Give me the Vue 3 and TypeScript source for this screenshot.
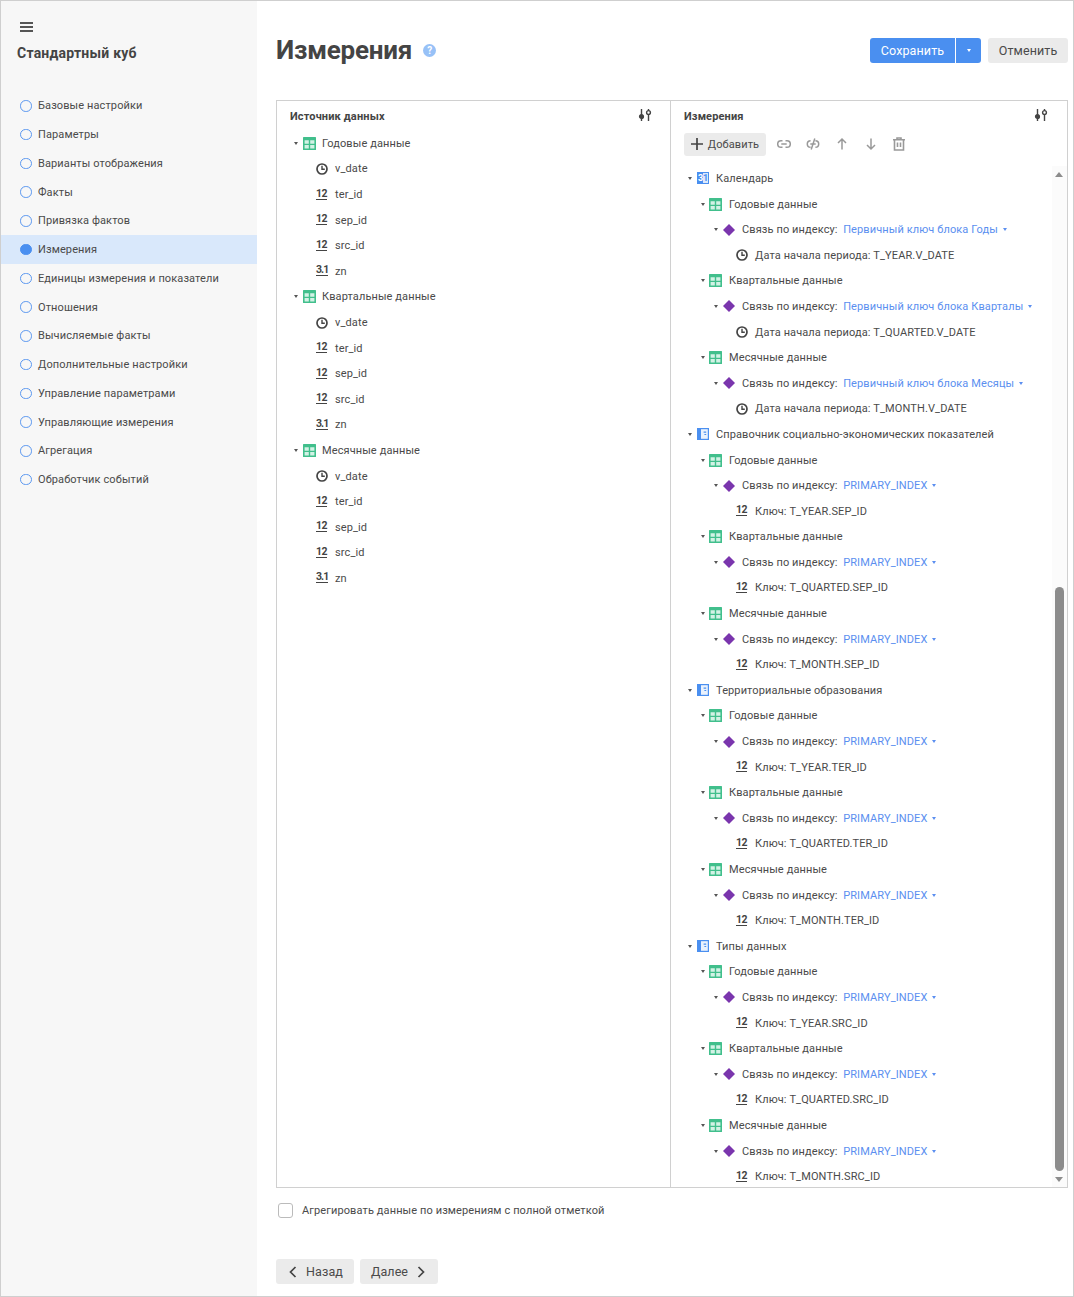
<script setup lang="ts">
type Kind = 'table' | 'clock' | 'n12' | 'n31' | 'cal' | 'dict' | 'diamond'
interface Row { level: number; icon: Kind; caret: boolean; text: string; link?: string }

const menu = [
  'Базовые настройки', 'Параметры', 'Варианты отображения', 'Факты', 'Привязка фактов', 'Измерения',
  'Единицы измерения и показатели', 'Отношения', 'Вычисляемые факты', 'Дополнительные настройки',
  'Управление параметрами', 'Управляющие измерения', 'Агрегация', 'Обработчик событий',
]

const blocks = ['Годовые данные', 'Квартальные данные', 'Месячные данные']

const sourceRows: Row[] = blocks.flatMap((b) => [
  { level: 0, icon: 'table' as Kind, caret: true, text: b },
  { level: 1, icon: 'clock' as Kind, caret: false, text: 'v_date' },
  { level: 1, icon: 'n12' as Kind, caret: false, text: 'ter_id' },
  { level: 1, icon: 'n12' as Kind, caret: false, text: 'sep_id' },
  { level: 1, icon: 'n12' as Kind, caret: false, text: 'src_id' },
  { level: 1, icon: 'n31' as Kind, caret: false, text: 'zn' },
])

function dim(name: string, icon: Kind, leaf: Kind, items: [string, string, string][]): Row[] {
  const rows: Row[] = [{ level: 0, icon, caret: true, text: name }]
  items.forEach(([block, link, key]) => {
    rows.push({ level: 1, icon: 'table', caret: true, text: block })
    rows.push({ level: 2, icon: 'diamond', caret: true, text: 'Связь по индексу:', link })
    rows.push({ level: 3, icon: leaf, caret: false, text: key })
  })
  return rows
}

function keyed(name: string, suffix: string): Row[] {
  return dim(name, 'dict', 'n12', [
    [blocks[0], 'PRIMARY_INDEX', `Ключ: T_YEAR.${suffix}`],
    [blocks[1], 'PRIMARY_INDEX', `Ключ: T_QUARTED.${suffix}`],
    [blocks[2], 'PRIMARY_INDEX', `Ключ: T_MONTH.${suffix}`],
  ])
}

const dimRows: Row[] = [
  ...dim('Календарь', 'cal', 'clock', [
    [blocks[0], 'Первичный ключ блока Годы', 'Дата начала периода: T_YEAR.V_DATE'],
    [blocks[1], 'Первичный ключ блока Кварталы', 'Дата начала периода: T_QUARTED.V_DATE'],
    [blocks[2], 'Первичный ключ блока Месяцы', 'Дата начала периода: T_MONTH.V_DATE'],
  ]),
  ...keyed('Справочник социально-экономических показателей', 'SEP_ID'),
  ...keyed('Территориальные образования', 'TER_ID'),
  ...keyed('Типы данных', 'SRC_ID'),
]

const indent = (level: number) => ({ paddingLeft: `${15 + level * 13}px` })
</script>

<template>
  <div class="page">
    <aside class="side">
      <button class="burger" aria-label="Меню"><i></i><i></i><i></i></button>
      <div class="cube">Стандартный куб</div>
      <ul class="menu">
        <li v-for="m in menu" :key="m" class="mi" :class="{ on: m === 'Измерения' }">
          <span class="dot"></span>{{ m }}
        </li>
      </ul>
    </aside>

    <main class="main">
      <header class="top">
        <h1>Измерения</h1>
        <span class="help">?</span>
        <div class="actions">
          <div class="split">
            <button class="btn primary save">Сохранить</button>
            <button class="btn primary drop"><span class="caret white"></span></button>
          </div>
          <button class="btn cancel">Отменить</button>
        </div>
      </header>

      <section class="panels">
        <div class="panel left">
          <div class="phead">
            <span>Источник данных</span>
            <svg class="tune" width="14" height="14" viewBox="0 0 14 14" fill="none" stroke="#444" stroke-width="1.4">
              <path d="M3.5 1v12M10.5 1v12" />
              <circle cx="3.5" cy="8.5" r="1.9" fill="#444" />
              <circle cx="10.5" cy="4.5" r="1.9" fill="#fff" />
            </svg>
          </div>
          <div class="tree">
            <div v-for="(r, i) in sourceRows" :key="i" class="row" :style="indent(r.level)">
              <span class="cbox"><span v-if="r.caret" class="caret"></span></span>
              <span class="ibox">
                <svg v-if="r.icon === 'table'" width="13" height="13" viewBox="0 0 13 13"><rect width="13" height="13" rx="0.5" fill="#41bf8c" /><path d="M1.6 3.2h4.2v3.6H1.6zM7.2 3.2h4.2v3.6H7.2zM1.6 8.1h4.2v3.4H1.6zM7.2 8.1h4.2v3.4H7.2z" fill="#d3f2e5" /></svg>
                <svg v-else-if="r.icon === 'clock'" width="12" height="12" viewBox="0 0 12 12" fill="none" stroke="#444" stroke-width="1.7"><circle cx="6" cy="6" r="5" /><path d="M6 2.8V6.3H8.8" stroke-width="1.4" /></svg>
                <span v-else class="num" :class="{ small: r.icon === 'n31' }">{{ r.icon === 'n12' ? '12' : '3.1' }}</span>
              </span>
              <span>{{ r.text }}</span>
            </div>
          </div>
        </div>

        <div class="panel right">
          <div class="phead">
            <span>Измерения</span>
            <svg class="tune" width="14" height="14" viewBox="0 0 14 14" fill="none" stroke="#444" stroke-width="1.4">
              <path d="M3.5 1v12M10.5 1v12" />
              <circle cx="3.5" cy="8.5" r="1.9" fill="#444" />
              <circle cx="10.5" cy="4.5" r="1.9" fill="#fff" />
            </svg>
          </div>
          <div class="tools">
            <button class="btn add">
              <svg width="12" height="12" viewBox="0 0 12 12" stroke="#444" stroke-width="1.7"><path d="M6 0v12M0 6h12" /></svg>
              Добавить
            </button>
            <svg class="tool" width="14" height="14" viewBox="0 0 14 14" fill="none" stroke="#999" stroke-width="1.5"><path d="M5.5 3.7H4a3.3 3.3 0 0 0 0 6.6h1.5M8.5 3.7H10a3.3 3.3 0 0 1 0 6.6H8.5M4.3 7h5.4" /></svg>
            <svg class="tool" width="14" height="14" viewBox="0 0 14 14" fill="none" stroke="#999" stroke-width="1.5"><path d="M4.6 3.7a3.3 3.3 0 0 0 0 6.6M9.4 3.7a3.3 3.3 0 0 1 0 6.6M4.3 7h5.4M8.8 1.5 5.2 12.5" /></svg>
            <svg class="tool" width="14" height="14" viewBox="0 0 14 14" fill="none" stroke="#999" stroke-width="1.5"><path d="M7 12.5V2M3 6l4-4 4 4" /></svg>
            <svg class="tool tight" width="14" height="14" viewBox="0 0 14 14" fill="none" stroke="#999" stroke-width="1.5"><path d="M7 1.5V12M3 8l4 4 4-4" /></svg>
            <svg class="tool" width="14" height="14" viewBox="0 0 14 14" fill="none" stroke="#999" stroke-width="1.6"><path d="M1 2.7h12M5 2.7V1h4v1.7M2.5 2.7V13h9V2.7M5.5 5.5V10M8.5 5.5V10" /></svg>
          </div>
          <div class="scroll">
            <div class="tree dims">
              <div v-for="(r, i) in dimRows" :key="i" class="row" :style="indent(r.level)">
                <span class="cbox"><span v-if="r.caret" class="caret"></span></span>
                <span class="ibox">
                  <svg v-if="r.icon === 'table'" class="nudge" width="13" height="13" viewBox="0 0 13 13"><rect width="13" height="13" rx="0.5" fill="#41bf8c" /><path d="M1.6 3.2h4.2v3.6H1.6zM7.2 3.2h4.2v3.6H7.2zM1.6 8.1h4.2v3.4H1.6zM7.2 8.1h4.2v3.4H7.2z" fill="#d3f2e5" /></svg>
                  <svg v-else-if="r.icon === 'clock'" width="12" height="12" viewBox="0 0 12 12" fill="none" stroke="#444" stroke-width="1.7"><circle cx="6" cy="6" r="5" /><path d="M6 2.8V6.3H8.8" stroke-width="1.4" /></svg>
                  <svg v-else-if="r.icon === 'diamond'" width="12" height="12" viewBox="0 0 12 12"><path d="M6 0 12 6 6 12 0 6z" fill="#7a35ad" /></svg>
                  <svg v-else-if="r.icon === 'dict'" width="12" height="12" viewBox="0 0 12 12"><rect width="12" height="12" fill="#4a8ff0" /><path d="M4 1.2h6.8v9.6H4z" fill="#eaf2fd" /><path d="M6.6 3.6h2.6v1.1H6.6zM7.4 6h1.8v1.1H7.4z" fill="#4a8ff0" /></svg>
                  <span v-else-if="r.icon === 'cal'" class="cal"><b>3</b><b>1</b></span>
                  <span v-else class="num">12</span>
                </span>
                <span>{{ r.text }}</span>
                <span v-if="r.link" class="link">{{ r.link }}<span class="caret blue"></span></span>
              </div>
            </div>
            <div class="bar">
              <span class="arr up"></span>
              <span class="thumb"></span>
              <span class="arr down"></span>
            </div>
          </div>
        </div>
      </section>

      <label class="check"><span class="box"></span>Агрегировать данные по измерениям с полной отметкой</label>

      <footer class="nav">
        <button class="btn navb back">
          <svg width="8" height="12" viewBox="0 0 8 12" fill="none" stroke="#444" stroke-width="1.7"><path d="M6.5 1 1.5 6l5 5" /></svg>
          Назад
        </button>
        <button class="btn navb next">
          Далее
          <svg width="8" height="12" viewBox="0 0 8 12" fill="none" stroke="#444" stroke-width="1.7"><path d="M1.5 1l5 5-5 5" /></svg>
        </button>
      </footer>
    </main>
  </div>
</template>

<style scoped>
.page {
  box-sizing: border-box;
  width: 1074px;
  height: 1297px;
  border: 1px solid #cfcfcf;
  display: flex;
  overflow: hidden;
  background: #fff;
  color: #4a4a4a;
  font-family: Roboto, "Liberation Sans", sans-serif;
  font-size: 11px;
  letter-spacing: 0.11px;
}
button { font-family: inherit; letter-spacing: inherit; border: 0; color: inherit; }

.side { width: 256px; flex: none; background: #f7f7f7; padding-top: 21px; }
.burger { display: block; width: 13px; height: 10px; margin-left: 19px; padding: 0; background: none; }
.burger i { display: block; height: 2px; background: #555; margin-bottom: 2px; }
.cube { margin: 12px 0 0 16px; font-size: 14px; font-weight: 700; line-height: 18px; letter-spacing: 0.22px; color: #444; }
.menu { list-style: none; margin: 29.45px 0 0; padding: 0; }
.mi { height: 28.75px; display: flex; align-items: center; padding-left: 19px; }
.mi.on { background: #d9e8fb; }
.dot { box-sizing: border-box; width: 11.5px; height: 11.5px; border: 1.4px solid #5a97f0; border-radius: 50%; margin-right: 6.5px; flex: none; }
.mi.on .dot { background: #4a8ff0; border-color: #4a8ff0; }

.main { flex: 1; min-width: 0; padding: 0 5px 0 19px; }
.top { height: 99px; display: flex; align-items: center; }
h1 { margin: -1px 0 0; font-size: 26px; font-weight: 700; letter-spacing: -0.2px; color: #444; }
.help { width: 13px; height: 13px; margin-left: 11px; border-radius: 50%; background: #97c1f7; color: #fff; font-size: 10px; font-weight: 700; line-height: 13px; text-align: center; letter-spacing: 0; }
.actions { margin-left: auto; display: flex; gap: 7px; }
.split { display: flex; gap: 1px; }
.btn { height: 25px; border-radius: 3px; font-size: 12.5px; padding: 0; display: flex; align-items: center; justify-content: center; }
.primary { background: #4a8ff0; color: #fff; }
.save { width: 85px; border-radius: 3px 0 0 3px; }
.drop { width: 25px; border-radius: 0 3px 3px 0; }
.cancel { width: 80px; background: #ebebeb; }

.panels { height: 1088px; box-sizing: border-box; border: 1px solid #d0d0d0; display: flex; }
.panel { display: flex; flex-direction: column; min-width: 0; }
.left { width: 393px; flex: none; border-right: 1px solid #d0d0d0; }
.right { flex: 1; }
.phead { height: 29.6px; flex: none; box-sizing: border-box; padding: 9px 18px 0 13px; display: flex; justify-content: space-between; font-weight: 700; font-size: 11px; line-height: 14px; letter-spacing: 0.14px; color: #444; }
.right .phead { padding-right: 19px; }
.tune { margin-top: -2px; }
.tools { height: 35.1px; flex: none; box-sizing: border-box; padding: 2.4px 0 0 13px; display: flex; align-items: flex-start; }
.add { width: 82px; height: 23px; background: #ebebeb; gap: 5px; font-size: 11px; margin-right: 10.5px; }
.tool { margin: 4px 15px 0 0; }
.tool.tight { margin-right: 14px; }
.scroll { flex: 1; min-height: 0; position: relative; overflow: hidden; }
.row { height: 25.6px; display: flex; align-items: center; white-space: nowrap; }
.cbox { width: 8px; margin-right: 3px; flex: none; display: flex; justify-content: center; }
.ibox { width: 13px; margin-right: 6px; flex: none; display: flex; align-items: center; justify-content: flex-start; }
.nudge { margin-left: -1px; }
.caret { display: inline-block; width: 0; height: 0; border-left: 2.5px solid transparent; border-right: 2.5px solid transparent; border-top: 3.5px solid #555; }
.caret.white { border-top-color: #fff; }
.caret.blue { border-top-color: #5b8ff0; margin-left: 5px; vertical-align: 2px; }
.link { color: #5b8ff0; margin-left: 5.5px; }
.num { display: inline-block; font-size: 10.5px; font-weight: 700; line-height: 10px; letter-spacing: -0.4px; border-bottom: 1.5px solid #444; color: #444; margin-top: -1px; }
.num.small { letter-spacing: -0.9px; }
.cal { display: flex; width: 12px; height: 12px; font-size: 9px; line-height: 12px; text-align: center; letter-spacing: 0; border: 1px solid #4a8ff0; box-sizing: border-box; background: #dce9fb; }
.cal b { width: 50%; font-weight: 700; color: #4a8ff0; line-height: 10px; }
.cal b:first-child { background: #4a8ff0; color: #fff; }

.bar { position: absolute; top: 0; right: 0; bottom: 0; width: 15px; background: #fbfbfb; }
.thumb { position: absolute; left: 3px; width: 9px; top: 421px; height: 584px; background: #8c8c8c; border-radius: 5px; }
.arr { position: absolute; left: 3px; width: 0; height: 0; border-left: 4.5px solid transparent; border-right: 4.5px solid transparent; }
.arr.up { top: 6px; border-bottom: 5px solid #8c8c8c; }
.arr.down { bottom: 5px; border-top: 5px solid #8c8c8c; }

.check { display: flex; align-items: center; height: 16px; margin: 14px 0 0 2px; }
.box { box-sizing: border-box; width: 15px; height: 15px; border: 1.5px solid #bbb; border-radius: 3px; margin-right: 9px; background: #fff; }
.nav { display: flex; gap: 6px; margin-top: 41px; }
.navb { width: 78px; background: #ebebeb; gap: 9px; }
.back { padding-left: 2px; }
.next { padding-right: 2px; }
</style>

<style>
html, body { margin: 0; background: #fff; }
</style>
